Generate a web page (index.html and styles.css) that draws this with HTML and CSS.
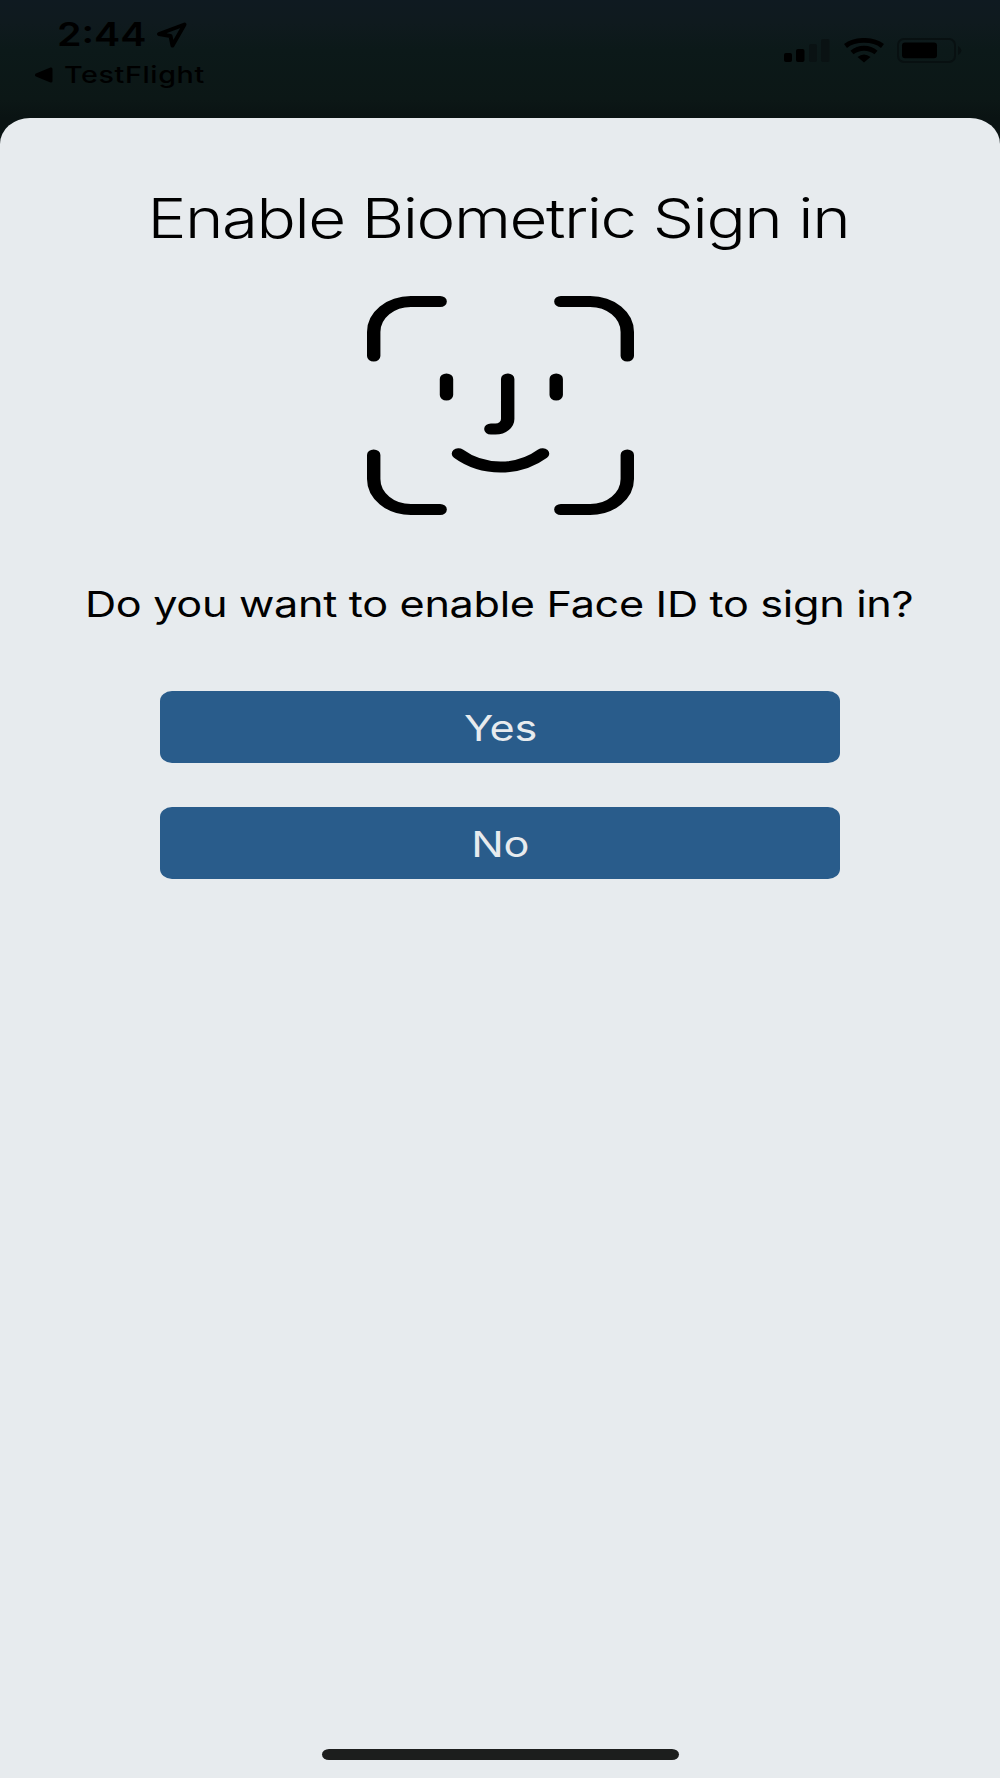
FILE: index.html
```html
<!DOCTYPE html>
<html lang="en">
<head>
<meta charset="utf-8">
<title>Enable Biometric Sign in</title>
<link rel="stylesheet" href="styles.css">
</head>
<body>
<header class="status">
  <div class="status-left">
    <div class="clock">
      <span class="time">2:44</span>
      <svg class="location" width="32" height="28" viewBox="0 0 32 28"><path d="M28.500 4.500 3 14 14.500 16 16.500 25.500Z"/></svg>
    </div>
    <div class="back">
      <svg width="20" height="16" viewBox="0 0 20 16"><path d="M2.500 8 17 2V14Z" stroke="#000" stroke-width="3" stroke-linejoin="round"/></svg>
      <span class="back-label">TestFlight</span>
    </div>
  </div>
  <div class="status-right">
    <svg width="46" height="26" viewBox="0 0 46 26">
      <rect y="15" width="8" height="9" rx="2"/><rect x="12" y="11" width="8.500" height="13" rx="2"/>
      <g fill="#0a1213"><rect x="25" y="6" width="8" height="18" rx="2"/><rect x="37" y="1" width="8.500" height="23" rx="2"/></g>
    </svg>
    <svg class="wifi" width="42" height="26" viewBox="0 0 42 26">
      <path d="M2.500 8C12 0.500 30 0.500 39.500 8M9 14.500C16 8.800 26 8.800 33 14.500" fill="none" stroke="#000" stroke-width="4.800"/>
      <path d="M14.500 19Q21 14 27.500 19L21 24.500Z"/>
    </svg>
    <svg width="66" height="26" viewBox="0 0 66 26">
      <rect x="1" y="1" width="57" height="23" rx="6" fill="none" stroke="#081011" stroke-width="2"/>
      <rect x="5" y="4.500" width="35" height="15.800" rx="3"/><path d="M61 8Q68 12.500 61 17Z" fill="#081011"/>
    </svg>
  </div>
</header>
<main class="sheet">
  <h1 class="title"><span>Enable Biometric Sign in</span></h1>
  <svg class="face" viewBox="0 0 219 219" preserveAspectRatio="none">
    <path d="M60 5.500H36A30.500 30.500 0 0 0 5.500 36V60M159 5.500H183A30.500 30.500 0 0 1 213.500 36V60M5.500 159V183A30.500 30.500 0 0 0 36 213.500H60M213.500 159V183A30.500 30.500 0 0 1 183 213.500H159M65.200 83V99M155.200 83V99M115.400 83V123A10 10 0 0 1 105.400 133H101.600M75 157.700C95 175.500 124 175.500 144 157.700"/>
  </svg>
  <p class="question"><span>Do you want to enable Face ID to sign in?</span></p>
  <div class="actions">
    <button class="action"><span>Yes</span></button>
    <button class="action"><span>No</span></button>
  </div>
  <div class="home"></div>
</main>
</body>
</html>
```
FILE: styles.css
```css
* { box-sizing: border-box; }
body {
  margin: 0;
  height: 1778px;
  display: flex;
  flex-direction: column;
  background: linear-gradient(#0f1a21 0, #0f1a1e 24px, #0c1919 50px, #0c1716 100px, #0a1313 118px);
  font-family: Inter, "Liberation Sans", sans-serif;
  color: #000;
}
.status {
  height: 118px;
  flex: none;
  display: flex;
  justify-content: space-between;
}
.status-left { padding-top: 15px; }
.clock { display: flex; padding-left: 57px; height: 39px; }
.time {
  width: 98px;
  font-size: 32px;
  line-height: 39px;
  font-weight: 600;
  transform: scaleX(1.23);
  transform-origin: left;
}
.location { margin: 5px 0 0 1px; fill: none; stroke: #000; stroke-width: 4; stroke-linejoin: round; }
.back { display: flex; align-items: center; gap: 10px; padding-left: 34px; margin-top: 6px; height: 29px; }
.back-label {
  font-size: 23.5px;
  line-height: 29px;
  font-weight: 500;
  letter-spacing: 0.5px;
  transform: scaleX(1.22);
  transform-origin: left;
}
.status-right { display: flex; gap: 12.5px; padding: 38px 37px 0 0; }
.sheet {
  flex: 1;
  display: flex;
  flex-direction: column;
  align-items: center;
  padding-top: 67px;
  border-radius: 30px 30px 0 0 / 26px 26px 0 0;
  background: #e7ebee;
}
.title {
  margin: 0;
  padding-right: 3px;
  font-size: 54.5px;
  line-height: 67px;
  font-weight: 300;
  letter-spacing: -1.2px;
  white-space: nowrap;
}
.title span, .question span, .action span { display: inline-block; transform: scaleX(1.2); }
.face {
  width: 267px;
  height: 219px;
  margin-top: 44px;
  fill: none;
  stroke: #000;
  stroke-width: 11;
  stroke-linecap: round;
}
.question { margin: 67px 0 0; padding-right: 1px; font-size: 36px; line-height: 44px; letter-spacing: -0.27px; white-space: nowrap; }
.actions { display: flex; flex-direction: column; gap: 44px; margin-top: 65.4px; }
.action {
  width: 680px;
  height: 72px;
  padding: 1px 0 0;
  border: 0;
  border-radius: 12px / 10px;
  background: #295c8b;
  color: #e7ebee;
  font: 400 36px/44px Inter, "Liberation Sans", sans-serif;
  letter-spacing: -0.3px;
}
.home { width: 357px; height: 11px; margin: auto 0 18px; border-radius: 7px / 5.5px; background: #1c1e1d; }
```
